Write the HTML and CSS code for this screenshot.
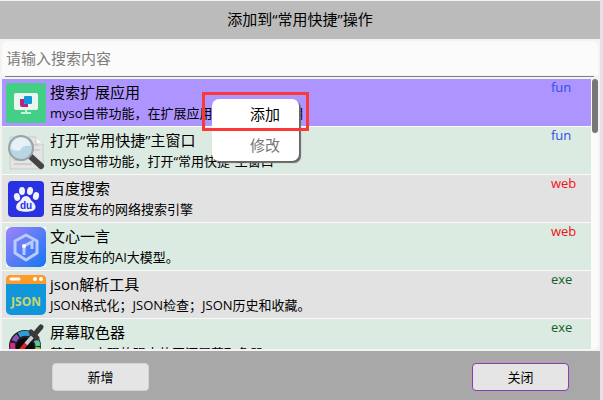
FILE: index.html
```
<!DOCTYPE html>
<html lang="zh-CN">

<head>
    <meta charset="UTF-8">
    <meta name="viewport" content="width=device-width, initial-scale=1.0">
    <title>添加到“常用快捷”操作</title>
    <link rel="stylesheet" href="styles.css">
</head>

<body>
    <div class="dialog">
        <header class="title">添加到“常用快捷”操作</header>

        <main class="content">
            <div class="search">
                <input class="search-input" type="text" placeholder="请输入搜索内容" aria-label="请输入搜索内容">
            </div>

            <div class="list-wrap">
                <ul class="list">
                    <li class="item selected">
                        <svg class="icon" viewBox="0 0 40 40">
                            <rect width="40" height="40" rx="2" fill="#43d086"/>
                            <rect x="8" y="10" width="24" height="17" rx="2" fill="#e9f7ef"/>
                            <path d="M20 27v3M15 30h10" stroke="#c4f2da" stroke-width="2"/>
                            <path d="M14 16h4v5h4v3h-6q-2 0-2-2z" fill="#b8257e"/>
                            <rect x="18" y="13" width="8" height="8" rx="1" fill="#1496dc"/>
                        </svg>
                        <div class="info">
                            <h3>搜索扩展应用</h3>
                            <p>myso自带功能，在扩展应用中搜索更多应用</p>
                        </div>
                        <span class="type fun">fun</span>
                    </li>
                    <li class="item">
                        <svg class="icon" viewBox="0 0 40 40">
                            <path d="M4 6h26l7 7v25H4z" fill="#e4e4e4" stroke="#c9cccb"/>
                            <path d="M30 6v7h7" fill="#fafafa" stroke="#c9cccb"/>
                            <path d="M22 14h11M23 19h11M8 29h12M8 33h18" stroke="#cfcfcf" stroke-width="2"/>
                            <path d="M24 25l11 10" stroke="#444" stroke-width="6" stroke-linecap="round"/>
                            <circle cx="15" cy="17" r="12" fill="#b9d6e5" stroke="#9aa3a6" stroke-width="2"/>
                            <path d="M5 18a10 10 0 0 1 20-3q-8-1-10 3t-10 0z" fill="#e6f1f7"/>
                        </svg>
                        <div class="info">
                            <h3>打开“常用快捷”主窗口</h3>
                            <p>myso自带功能，打开“常用快捷”主窗口</p>
                        </div>
                        <span class="type fun">fun</span>
                    </li>
                    <li class="item">
                        <svg class="icon" viewBox="0 0 40 40">
                            <rect x="2" y="2" width="36" height="36" rx="4" fill="#2932e1"/>
                            <g fill="#f1f2fd">
                                <ellipse cx="11" cy="18" rx="3" ry="4" transform="rotate(-15 11 18)"/>
                                <ellipse cx="16" cy="12" rx="3" ry="4"/>
                                <ellipse cx="24" cy="12" rx="3" ry="4" transform="rotate(10 24 12)"/>
                                <ellipse cx="30" cy="17" rx="3" ry="4" transform="rotate(15 30 17)"/>
                                <path d="M20 17c4 0 4 4 7 6 4 4 3 8-1 9-3 1-9 1-12 0-5-1-5-6-1-9 3-2 3-6 7-6z"/>
                            </g>
                            <text class="du" x="20" y="30" text-anchor="middle">du</text>
                        </svg>
                        <div class="info">
                            <h3>百度搜索</h3>
                            <p>百度发布的网络搜索引擎</p>
                        </div>
                        <span class="type web">web</span>
                    </li>
                    <li class="item">
                        <svg class="icon" viewBox="0 0 40 40">
                            <defs>
                                <linearGradient id="yiyan" x1="0" y1="0" x2="1" y2="1">
                                    <stop offset="0" stop-color="#9d83fa"/>
                                    <stop offset="1" stop-color="#1676f3"/>
                                </linearGradient>
                            </defs>
                            <rect width="40" height="40" fill="#fff"/>
                            <rect width="40" height="40" rx="6" fill="url(#yiyan)"/>
                            <path d="M20 8l11 6v12l-11 7-11-7V14z" fill="none" stroke="#b9ccff" stroke-width="3" stroke-linejoin="round"/>
                            <path d="M18 28v-9l8-4v7" fill="none" stroke="#b9ccff" stroke-width="3"/>
                            <circle cx="18" cy="19" r="2" fill="#fff"/>
                        </svg>
                        <div class="info">
                            <h3>文心一言</h3>
                            <p>百度发布的AI大模型。</p>
                        </div>
                        <span class="type web">web</span>
                    </li>
                    <li class="item">
                        <svg class="icon" viewBox="0 0 40 40">
                            <rect width="40" height="40" rx="5" fill="#1296db"/>
                            <path d="M0 9V5q0-5 5-5h30q5 0 5 5v4z" fill="#ff9a2b"/>
                            <path d="M5 4h8" stroke="#fff" stroke-width="3" stroke-linecap="round"/>
                            <circle cx="29" cy="4" r="2" fill="#fff"/>
                            <circle cx="35" cy="4" r="2" fill="#fff"/>
                            <text class="json" x="20" y="31" text-anchor="middle">JSON</text>
                        </svg>
                        <div class="info">
                            <h3>json解析工具</h3>
                            <p>JSON格式化；JSON检查；JSON历史和收藏。</p>
                        </div>
                        <span class="type exe">exe</span>
                    </li>
                    <li class="item">
                        <svg class="icon" viewBox="0 0 40 40">
                            <circle cx="19" cy="23" r="16" fill="#222"/>
                            <g fill="none" stroke-width="5">
                                <path d="M8 29a13 13 0 0 1-1-9" stroke="#d12a8b"/>
                                <path d="M8 18a13 13 0 0 1 4-5" stroke="#8a50c0"/>
                                <path d="M13 12a13 13 0 0 1 11-1" stroke="#2b9fd8"/>
                                <path d="M30 17a13 13 0 0 1 2 6" stroke="#58c5a0"/>
                                <path d="M32 24a13 13 0 0 1-5 9" stroke="#8fc63f"/>
                            </g>
                            <circle cx="19" cy="24" r="9" fill="#0c0c0c"/>
                            <path d="M14 28l6-7" stroke="#e02222" stroke-width="4" stroke-linecap="round"/>
                            <path d="M20 21l7-8" stroke="#c4cdd0" stroke-width="4"/>
                            <path d="M25 9l6 6M28 12l7-8" stroke="#3a3a3a" stroke-width="5" stroke-linecap="round"/>
                        </svg>
                        <div class="info">
                            <h3>屏幕取色器</h3>
                            <p>基于Qt 实现的强大的开源屏幕取色器</p>
                        </div>
                        <span class="type exe">exe</span>
                    </li>
                </ul>
                <div class="scrollbar"></div>

                <!-- right click menu of the selected item -->
                <div class="menu">
                    <button class="menu-item">添加</button>
                    <button class="menu-item muted">修改</button>
                </div>
                <div class="highlight"></div>
            </div>
        </main>

        <footer class="footer">
            <button class="btn">新增</button>
            <button class="btn btn-close">关闭</button>
        </footer>
    </div>
</body>

</html>
```
FILE: styles.css
```
* {
    box-sizing: border-box;
}

body {
    margin: 0;
    color: #000;
    background-color: #e8dfec;
    font-family: "Open Sans", "Noto Sans CJK SC", sans-serif;
}

.dialog {
    height: 100vh;
    margin-right: 3px;
    border-top: 1px solid #f4f4f4;
    display: flex;
    flex-direction: column;
    background-color: #f3f3f3;
}

.title {
    height: 38px;
    line-height: 37px;
    text-align: center;
    font-size: 15px;
    background-color: #bbb;
}

.content {
    flex: 1;
    min-height: 0;
    padding: 2px 2px;
    display: flex;
    flex-direction: column;
}

.search {
    height: 38px;
    flex-shrink: 0;
    padding: 0 4px 0 3px;
    border-radius: 5px;
    background: linear-gradient(#fbfbfb, #fbfbfb) no-repeat 0 0 / 100% 34px;
}

.search-input {
    width: 100%;
    height: 36px;
    padding: 0 1px 2px;
    border: none;
    border-bottom: 1px solid #7f847c;
    outline: none;
    background: transparent;
    font-family: inherit;
    font-size: 15px;
}

.search-input::placeholder {
    color: #7d7d7d;
}

.list-wrap {
    position: relative;
    flex: 1;
    min-height: 0;
    display: flex;
    gap: 1px;
    background-color: #fbfbfb;
    border-radius: 0 0 5px 5px;
}

.list {
    flex: 1;
    min-width: 0;
    margin: 0;
    padding: 0;
    list-style: none;
    overflow: hidden;
}

.item {
    height: 48px;
    padding: 0 14px 0 4px;
    display: flex;
    align-items: center;
    gap: 4px;
    border-bottom: 1px solid #fafafa;
    background-color: #e2e2e2;
}

.item:nth-child(even) {
    background-color: #dcebe1;
}

.item.selected {
    background-color: #ae94ff;
}

.icon {
    width: 40px;
    height: 40px;
    flex-shrink: 0;
}

.info {
    flex: 1;
    min-width: 0;
    padding-bottom: 2px;
    white-space: nowrap;
}

.info h3 {
    margin: 0;
    font-size: 15px;
    font-weight: 400;
    line-height: 22px;
}

.info p {
    margin: 0;
    font-size: 13px;
    line-height: 20px;
}

.type {
    width: 26px;
    align-self: flex-start;
    font-size: 13px;
    line-height: 16px;
}

.fun {
    color: #2b50e8;
}

.web {
    color: #f01414;
}

.exe {
    color: #12602a;
}

.du {
    font: bold 10px "Liberation Sans", sans-serif;
    fill: #2932e1;
}

.json {
    font: bold 12px "Open Sans", sans-serif;
    fill: #c9d66b;
}

.scrollbar {
    width: 6px;
    height: 54px;
    border-radius: 3px;
    background-color: #777;
}

.menu {
    position: absolute;
    top: 20px;
    left: 210px;
    width: 87px;
    border-radius: 7px;
    background-color: #fff;
    box-shadow: 2px 2px 1px #666;
}

.menu-item {
    display: block;
    width: 100%;
    height: 31px;
    padding: 0 0 2px 38px;
    border: none;
    background: none;
    text-align: left;
    font-family: inherit;
    font-size: 15px;
    color: #000;
}

.muted {
    color: #777;
}

.highlight {
    position: absolute;
    top: 13px;
    left: 200px;
    width: 107px;
    height: 39px;
    border: 3px solid #fa3838;
    pointer-events: none;
}

.footer {
    height: 49px;
    flex-shrink: 0;
    padding: 12px 31px 0 52px;
    display: flex;
    justify-content: space-between;
    align-items: flex-start;
    background-color: #a8a8a8;
}

.btn {
    width: 97px;
    height: 28px;
    padding: 0 0 2px;
    border: 1px solid #d4d4d4;
    border-radius: 4px;
    background-color: #e5e5e5;
    color: #000;
    font-family: inherit;
    font-size: 13px;
}

.btn-close {
    border-color: #8f3bb0;
}
```
